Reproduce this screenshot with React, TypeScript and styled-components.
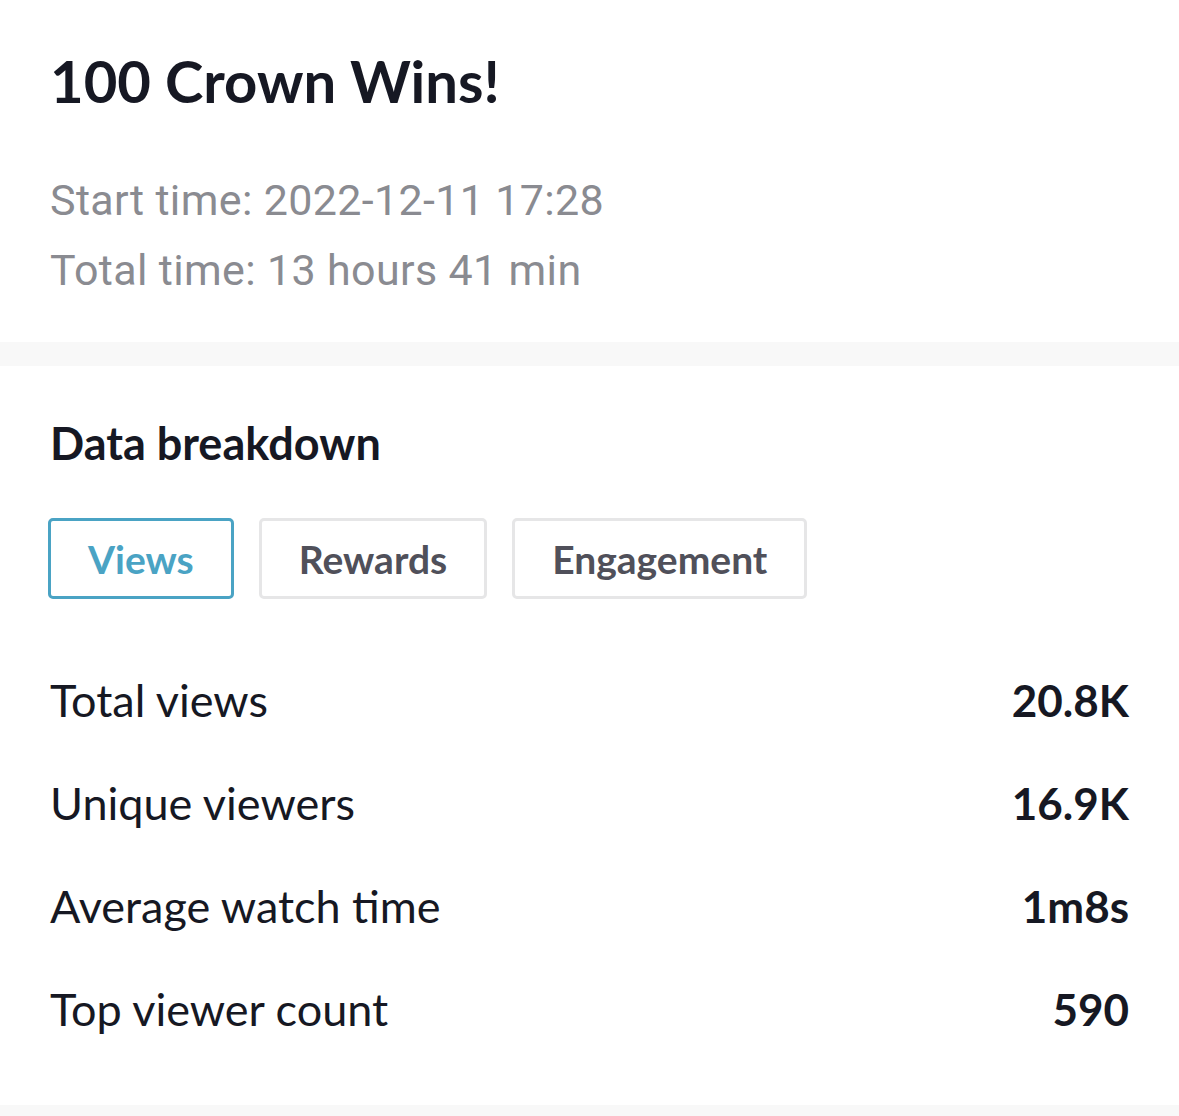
import { createGlobalStyle } from 'styled-components';
import styled from 'styled-components';

const GlobalStyle = createGlobalStyle`
  html, body {
    margin: 0;
    padding: 0;
    background: #ffffff;
  }
  body {
    font-family: 'Lato', 'Noto Sans', sans-serif;
    color: #161823;
  }
`;

const Page = styled.div`
  width: 1179px;
  height: 1116px;
  background: #f8f8f8;
  display: flex;
  flex-direction: column;
  gap: 24px;
  overflow: hidden;
`;

const Header = styled.section`
  background: #ffffff;
  padding: 47px 50px 37px;
`;

const Title = styled.h1`
  margin: 0 0 50px;
  font-family: 'Lato', sans-serif;
  font-weight: 700;
  font-size: 58px;
  line-height: 68px;
  color: #161823;
`;

const Meta = styled.p`
  margin: 0;
  font-family: 'Roboto', 'Liberation Sans', sans-serif;
  font-size: 43px;
  line-height: 70px;
  letter-spacing: 0.35px;
  color: #8a8b91;
`;

const Breakdown = styled.section`
  background: #ffffff;
  padding: 52px 50px 45px;
`;

const SectionTitle = styled.h2`
  margin: 0 0 50px;
  font-family: 'Lato', sans-serif;
  font-weight: 700;
  font-size: 45px;
  line-height: 50px;
  color: #161823;
`;

const Tabs = styled.div`
  display: flex;
  gap: 25px;
  margin: 0 0 49px -2px;
`;

const Tab = styled.button<{ $active?: boolean }>`
  height: 81px;
  padding: 0 37px;
  background: #ffffff;
  border: 3px solid ${(p) => (p.$active ? '#4aa3c4' : '#e6e6e7')};
  border-radius: 5px;
  font-family: 'Lato', sans-serif;
  font-weight: 700;
  font-size: 39px;
  color: ${(p) => (p.$active ? '#4aa3c4' : '#50505a')};
  cursor: pointer;
`;

const Row = styled.div`
  display: flex;
  justify-content: space-between;
  align-items: center;
  height: 103px;
`;

const Label = styled.span`
  font-family: 'Lato', sans-serif;
  font-size: 45px;
  line-height: 54px;
  color: #161823;
`;

const Value = styled.span`
  font-family: 'Lato', sans-serif;
  font-weight: 700;
  font-size: 44px;
  line-height: 54px;
  color: #161823;
`;

const rows = [
  ['Total views', '20.8K'],
  ['Unique viewers', '16.9K'],
  ['Average watch time', '1m8s'],
  ['Top viewer count', '590'],
];

export default function App() {
  return (
    <>
      <GlobalStyle />
      <Page>
        <Header>
          <Title>100 Crown Wins!</Title>
          <Meta>Start time: 2022-12-11 17:28</Meta>
          <Meta>Total time: 13 hours 41 min</Meta>
        </Header>
        <Breakdown>
          <SectionTitle>Data breakdown</SectionTitle>
          <Tabs>
            <Tab $active>Views</Tab>
            <Tab>Rewards</Tab>
            <Tab>Engagement</Tab>
          </Tabs>
          {rows.map(([label, value]) => (
            <Row key={label}>
              <Label>{label}</Label>
              <Value>{value}</Value>
            </Row>
          ))}
        </Breakdown>
      </Page>
    </>
  );
}
